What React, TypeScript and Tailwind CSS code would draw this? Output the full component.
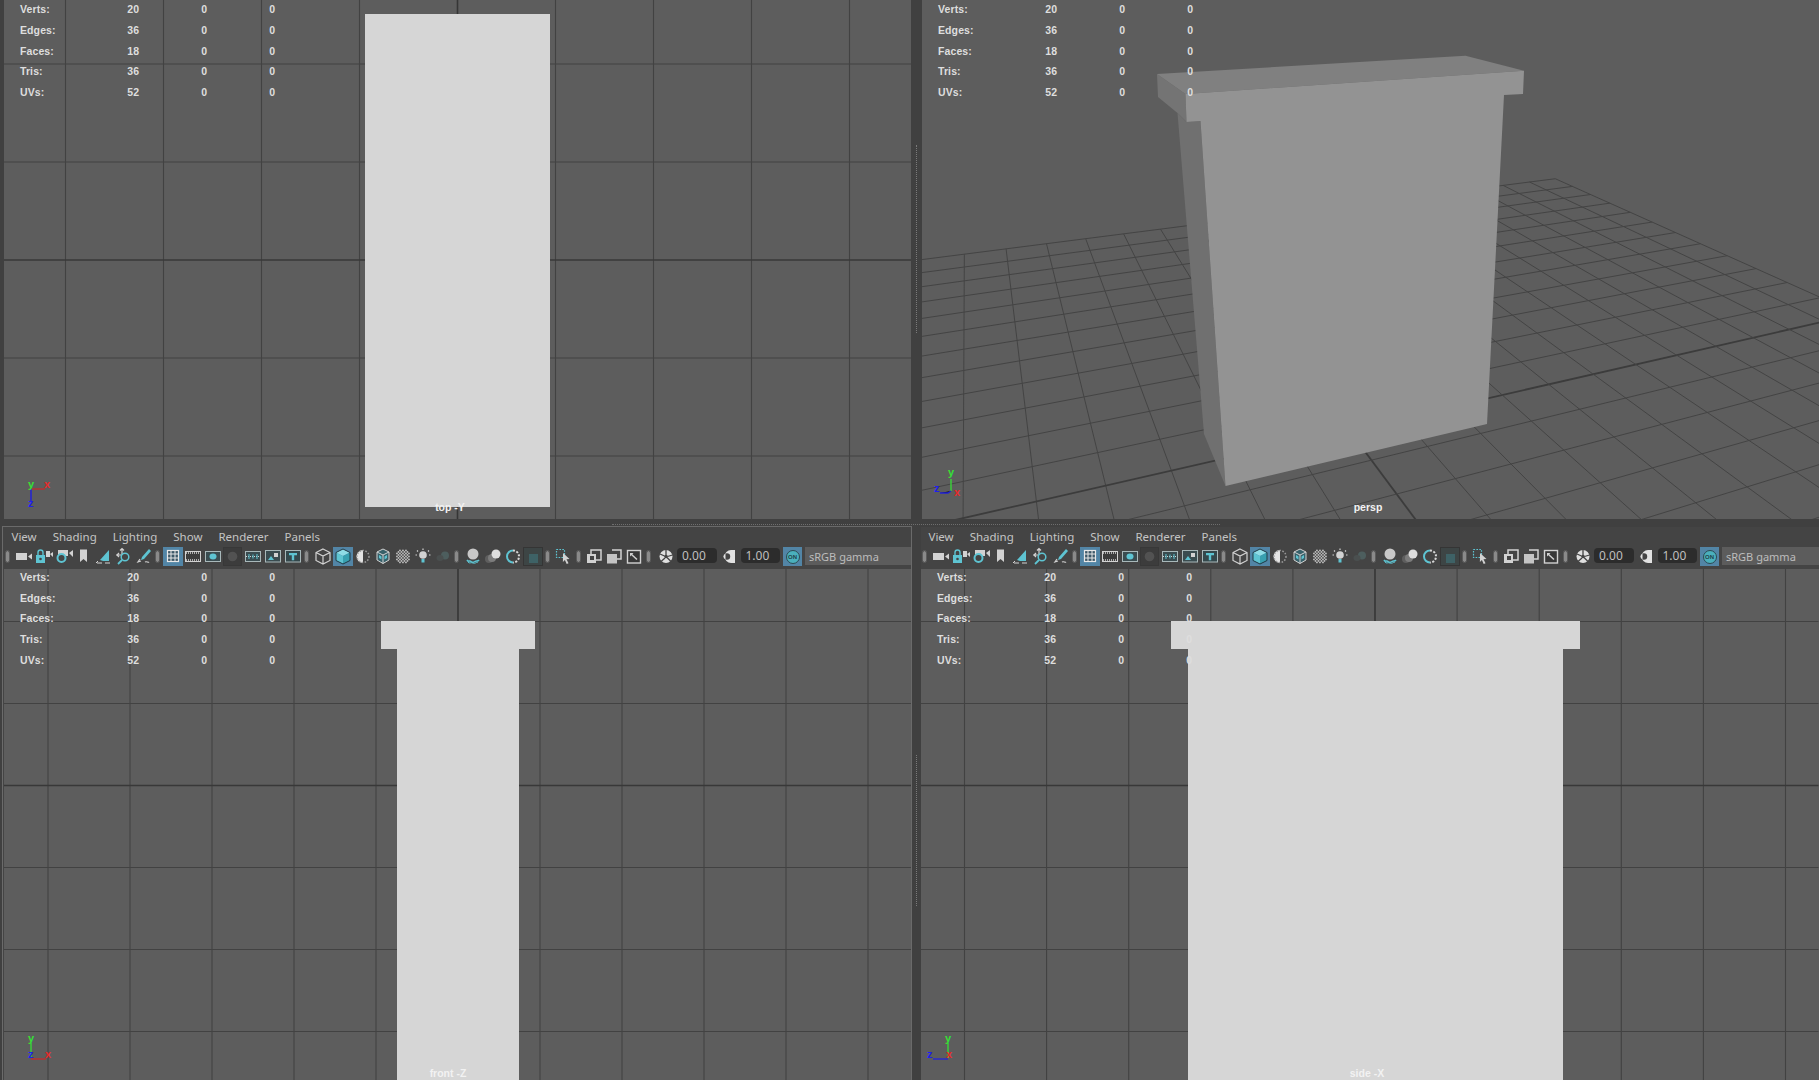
import type { ReactNode } from "react";

const LIGHT = "#d2d2d2";
const TEAL = "#5ec4d2";

const HUD_ROWS = [
  ["Verts:", "20"],
  ["Edges:", "36"],
  ["Faces:", "18"],
  ["Tris:", "36"],
  ["UVs:", "52"],
];

const MENU = ["View", "Shading", "Lighting", "Show", "Renderer", "Panels"];

// dots of the checker sphere
const CHECKS: number[][] = [];
for (let r = 0; r < 9; r++) {
  for (let c = 0; c < 9; c++) {
    if ((r + c) % 2 === 0 && Math.hypot(r - 4, c - 4) < 4.6) CHECKS.push([c, r]);
  }
}

// toolbar glyphs, all in a 20x19 box
const ICONS: Record<string, ReactNode> = {
  camera: (
    <>
      <rect x="2" y="6" width="11" height="7" fill={LIGHT} />
      <path d="M14 9.5l4-3v6z" fill={LIGHT} />
    </>
  ),
  cameraLock: (
    <>
      <path d="M12 4h4v6h-4z M16 7l3-2v5z" fill={LIGHT} />
      <rect x="2" y="8" width="9" height="8" fill={TEAL} />
      <path d="M4 8V5.500a2.500 2.500 0 0 1 5 0V8" fill="none" stroke={TEAL} strokeWidth="1.4" />
      <circle cx="6.500" cy="12" r="1.300" fill="#444" />
    </>
  ),
  cameraSync: (
    <>
      <path d="M4 3h10v6H4z M15 6l4-3v7z" fill={LIGHT} />
      <circle cx="7.500" cy="11" r="4" fill="#444" stroke={TEAL} strokeWidth="2" />
    </>
  ),
  bookmark: <path d="M6 2.500h7v12.500l-3.500-3-3.500 3z" fill={LIGHT} />,
  plane: (
    <>
      <path d="M6 13L15 3v11H9z" fill={TEAL} />
      <path d="M3 16h5M11 16h5M4 14l-2 2" stroke={LIGHT} strokeWidth="1" fill="none" />
    </>
  ),
  panZoom: (
    <>
      <path d="M8 2v6M2 8h5M5 6L3 8l2 2M6 3.500L8 1.500l2 2" stroke={LIGHT} strokeWidth="1.200" fill="none" />
      <circle cx="11" cy="10" r="3.800" fill="none" stroke={TEAL} strokeWidth="1.500" />
      <path d="M8 13l-4 4" stroke={TEAL} strokeWidth="1.800" />
    </>
  ),
  pencil: (
    <>
      <path d="M15 2l2 2-7 8-3 1 1-3z" fill={TEAL} />
      <path d="M6 12l-2 3 3-1M11 15c2-1 3 1 4 0" stroke={LIGHT} strokeWidth="1.200" fill="none" />
    </>
  ),
  grid: (
    <>
      <rect x="4.500" y="3.500" width="11" height="11" fill="#3d5868" stroke="#e8e8e8" strokeWidth="1.200" />
      <path d="M8 3.500v11M12 3.500v11M4.500 7h11M4.500 11h11" stroke="#e8e8e8" strokeWidth="1" />
    </>
  ),
  film: (
    <>
      <rect x="2.500" y="4.500" width="15" height="10" fill="#3c3c3c" stroke={LIGHT} strokeWidth="1" />
      <path d="M3 6h14M3 13h14" stroke={LIGHT} strokeWidth="1.400" strokeDasharray="1 1" />
    </>
  ),
  gate: (
    <>
      <rect x="2.500" y="4.500" width="15" height="10" fill="#3a4c50" stroke="#a8b8ba" strokeWidth="1" />
      <ellipse cx="10" cy="9.500" rx="3.500" ry="3" fill={TEAL} />
    </>
  ),
  field: (
    <>
      <rect x="0.500" y="0.500" width="18" height="18" fill="#3c3c3c" stroke="#383838" />
      <circle cx="9.500" cy="9.500" r="4.800" fill="#525252" />
    </>
  ),
  safe: (
    <>
      <rect x="2.500" y="4.500" width="15" height="10" fill="#3a4c50" stroke="#a8b8ba" strokeWidth="1" />
      <path d="M3 9.500h14" stroke={LIGHT} strokeDasharray="1 1" />
      <path d="M6 7v5M10 7.500v4M14 7v5" stroke={TEAL} />
    </>
  ),
  image: (
    <>
      <rect x="2.500" y="3.500" width="15" height="11.500" fill="#3a4c50" stroke="#a8b8ba" strokeWidth="1" />
      <path d="M5 13l3-4 3 4z" fill={TEAL} />
      <rect x="11" y="6" width="4" height="4" fill={LIGHT} />
    </>
  ),
  text: (
    <>
      <rect x="2.500" y="3.500" width="15" height="11.500" fill="#34484c" stroke="#a8b8ba" strokeWidth="1" />
      <path d="M6 6h8v2.200h-2.800v5h-2.400v-5H6z" fill={TEAL} />
    </>
  ),
  wire: (
    <path
      d="M10 2l7 3.500v8L10 17l-7-3.500v-8zM3 5.500L10 9l7-3.500M10 9v8"
      fill="none"
      stroke={LIGHT}
      strokeWidth="1.200"
    />
  ),
  solid: (
    <>
      <path d="M10 2l7 3.500L10 9 3 5.500z" fill="#8fdce6" />
      <path d="M3 5.500L10 9v8l-7-3.500z" fill={TEAL} />
      <path d="M17 5.500L10 9v8l7-3.500z" fill="#38a0b0" />
      <path d="M10 2l7 3.500v8L10 17l-7-3.500v-8z" fill="none" stroke="#1f3a44" />
    </>
  ),
  halfSphere: (
    <>
      <path d="M10 3a6.500 6.500 0 0 0 0 13z" fill="#e4e4e4" />
      <circle cx="10" cy="9.500" r="6" fill="none" stroke="#9a9a9a" strokeWidth="1.500" strokeDasharray="1.500 1.500" />
    </>
  ),
  texture: (
    <>
      <path d="M10 2l6 3v8l-6 3.500L4 13V5z" fill="#38616a" stroke={LIGHT} />
      <path d="M4 5l6 3 6-3M10 8v8.500" stroke={LIGHT} fill="none" />
      <path d="M6 8l2.500 1.500v3L6 11z M14 8l-2.500 1.500v3L14 11z" fill={TEAL} />
    </>
  ),
  checker: (
    <>
      {CHECKS.map(([c, r]) => (
        <rect key={`${c}-${r}`} x={3.2 + c * 1.5} y={2.700 + r * 1.5} width="1.500" height="1.500" fill="#cfcfcf" />
      ))}
    </>
  ),
  bulb: (
    <>
      <circle cx="10" cy="8" r="3.800" fill={LIGHT} />
      <rect x="8.500" y="12" width="3" height="3.500" fill={TEAL} />
      <path d="M10 1.500v1.500M4 3.500l1 1M16 3.500l-1 1M2.500 8H4M16 8h1.500" stroke={LIGHT} strokeWidth="1.200" />
    </>
  ),
  shadow: (
    <>
      <circle cx="12" cy="8.500" r="4" fill="#4d5e5e" />
      <ellipse cx="7" cy="11" rx="3.500" ry="3" fill="#4a4f4f" />
    </>
  ),
  ao: (
    <>
      <circle cx="10" cy="7" r="5.500" fill="#c8c8c8" />
      <path d="M4 13c1.500 2.500 2.500 0 4 1.500s2.500 1 4 0 2.500.5 4-1.500" fill="none" stroke={TEAL} strokeWidth="1.500" />
      <path d="M5 15c1.500 2 2.500 0 5 1s3-1 5-1" fill="none" stroke={TEAL} strokeWidth="1" />
    </>
  ),
  spheres: (
    <>
      <circle cx="6" cy="12" r="4" fill="#5e5e5e" />
      <circle cx="9" cy="11" r="4" fill="#7c7c7c" />
      <circle cx="13" cy="7" r="4.500" fill="#dedede" />
    </>
  ),
  ring: (
    <>
      <path d="M10 3.500a6 6 0 0 0 0 12" fill="none" stroke={TEAL} strokeWidth="2" />
      <path d="M10 3.500a6 6 0 0 1 0 12" fill="none" stroke="#d8d8d8" strokeWidth="2" strokeDasharray="2 1.500" />
    </>
  ),
  dimBox: (
    <>
      <rect x="0.500" y="0.500" width="19" height="18" fill="#3d4545" stroke="#353535" />
      <rect x="6" y="7" width="9" height="9" fill="#3e6266" />
    </>
  ),
  select: (
    <>
      <rect x="3.500" y="2.500" width="8" height="8" fill="none" stroke={TEAL} strokeWidth="1.200" strokeDasharray="1.600 1.300" />
      <path d="M10 6l6.500 6-3 .3 2 4-1.800.8-1.800-4-2 2z" fill={LIGHT} />
    </>
  ),
  isolate: (
    <>
      <rect x="7" y="3" width="10" height="10" fill="#444" stroke={LIGHT} strokeWidth="1.500" />
      <rect x="3" y="7" width="9" height="9" fill={LIGHT} />
      <rect x="6" y="9" width="4" height="4" fill="#444" />
    </>
  ),
  overlap: (
    <>
      <path d="M8 3h9v9h-4" fill="none" stroke={LIGHT} strokeWidth="1.500" />
      <rect x="3" y="7" width="10" height="9.500" fill="#c4c4c4" />
    </>
  ),
  boxArrow: (
    <>
      <rect x="3.500" y="3.500" width="13" height="12.500" fill="#383838" stroke={LIGHT} strokeWidth="1.400" />
      <path d="M7 7l6 5.500" stroke={LIGHT} strokeWidth="1.500" />
      <path d="M6 6h3.500L6 9.500z" fill={LIGHT} />
    </>
  ),
  aperture: (
    <>
      <circle cx="10" cy="9.500" r="6.500" fill="#e0e0e0" />
      <path d="M10 3v5M4 7l4.500 2M5 14.500L9 11M15 14.500l-4-4M16.500 8L11.500 9.500" stroke="#444" strokeWidth="1.300" />
      <circle cx="10" cy="9.500" r="1.800" fill="#444" />
    </>
  ),
  half: (
    <>
      <path d="M12 3h4v13h-4a6.500 6.500 0 0 1 0-13z" fill="#e2e2e2" />
      <circle cx="8" cy="9.500" r="3.200" fill="#444" />
      <path d="M6.500 6.500a3.200 3.200 0 0 0 0 6z" fill="#e2e2e2" />
    </>
  ),
};

function Ico({ name, on }: { name: string; on?: boolean }) {
  return (
    <div className={on ? "w-5 h-[19px] shrink-0 bg-[#5285a6]" : "w-5 h-[19px] shrink-0"}>
      <svg width="20" height="19" viewBox="0 0 20 19">
        {ICONS[name]}
      </svg>
    </div>
  );
}

function Sep({ className }: { className: string }) {
  return (
    <div className={`w-1 h-[19px] shrink-0 flex items-center justify-center ${className}`}>
      <div className="w-[3px] h-[11px] rounded-sm bg-[#8a8a8a] outline-[1px] outline-[#5c5c5c]" />
    </div>
  );
}

function NumField({ value }: { value: string }) {
  return (
    <div className="w-[39.5px] h-[15px] mt-px shrink-0 rounded-sm bg-[#2c2c2c] pl-[5px] text-[#bfbfbf] text-[12px] leading-[15px] font-['Noto_Sans',sans-serif]">
      {value}
    </div>
  );
}

function PanelChrome() {
  return (
    <>
      <div className="h-5 flex items-center gap-[16px] pl-[7.5px] text-[11.5px] text-[#c4c4c4] font-['Noto_Sans',sans-serif]">
        {MENU.map((m) => (
          <span key={m}>{m}</span>
        ))}
      </div>
      <div className="h-[22px] flex items-start pl-px">
        <Sep className="" />
        <div className="flex ml-[5px]">
          <Ico name="camera" />
          <Ico name="cameraLock" />
          <Ico name="cameraSync" />
          <Ico name="bookmark" />
          <Ico name="plane" />
          <Ico name="panZoom" />
          <Ico name="pencil" />
        </div>
        <Sep className="ml-px" />
        <div className="flex ml-[4px]">
          <Ico name="grid" on />
          <Ico name="film" />
          <Ico name="gate" />
          <Ico name="field" />
          <Ico name="safe" />
          <Ico name="image" />
          <Ico name="text" />
        </div>
        <Sep className="ml-px" />
        <div className="flex ml-[5px]">
          <Ico name="wire" />
          <Ico name="solid" on />
          <Ico name="halfSphere" />
          <Ico name="texture" />
          <Ico name="checker" />
          <Ico name="bulb" />
          <Ico name="shadow" />
        </div>
        <Sep className="ml-px" />
        <div className="flex ml-[5px]">
          <Ico name="ao" />
          <Ico name="spheres" />
          <Ico name="ring" />
          <Ico name="dimBox" />
        </div>
        <Sep className="ml-[2px]" />
        <div className="ml-[4px]">
          <Ico name="select" />
        </div>
        <Sep className="ml-[3px]" />
        <div className="flex ml-[4px]">
          <Ico name="isolate" />
          <Ico name="overlap" />
          <Ico name="boxArrow" />
        </div>
        <Sep className="ml-[2px]" />
        <div className="ml-[6px]">
          <Ico name="aperture" />
        </div>
        <div className="ml-px">
          <NumField value="0.00" />
        </div>
        <div className="ml-[2px]">
          <Ico name="half" />
        </div>
        <div className="ml-[2px]">
          <NumField value="1.00" />
        </div>
        <div className="ml-[3px] w-[19px] h-[19px] shrink-0 bg-[#5285a6] flex items-center justify-center">
          <div className="w-[14px] h-[14px] rounded-full bg-[#4ab0bc] border border-[#2c4a52] text-[6px] leading-[12px] text-center font-bold text-[#23424a] font-['Liberation_Sans',sans-serif]">
            ON
          </div>
        </div>
        <div className="ml-[3px] flex-1 min-w-0 h-[18px] bg-[#5c5c5c] pl-[4px] text-[11px] leading-[19px] text-[#bdbdbd] font-['Noto_Sans',sans-serif]">
          sRGB gamma
        </div>
      </div>
    </>
  );
}

function Hud({ top }: { top: string }) {
  return (
    <div
      className={`absolute left-4 ${top} grid grid-cols-[60px_59px_68px_68px] auto-rows-[20.75px] items-center text-[10.5px] font-bold text-[#dedede] font-['Liberation_Sans',sans-serif]`}
    >
      {HUD_ROWS.map(([label, n]) => (
        <div key={label} className="contents">
          <span className="tracking-[0.1px]">{label}</span>
          <span className="text-right">{n}</span>
          <span className="text-right">0</span>
          <span className="text-right">0</span>
        </div>
      ))}
    </div>
  );
}

function Gizmo({ kind, className }: { kind: "top" | "front" | "side" | "persp"; className: string }) {
  const letter = "font-['Liberation_Sans',sans-serif] font-bold text-[11px]";
  const green = "#35e035";
  const red = "#e82a2a";
  const blue = "#2020ee";
  return (
    <svg className={`absolute ${className}`} width="44" height="50" viewBox="0 -6 44 50">
      {kind === "top" && (
        <>
          <path d="M14 13h14" stroke="#c52a2a" strokeWidth="1.300" />
          <path d="M14 13v13" stroke="#2222d8" strokeWidth="1.500" />
          <text x="11" y="12" fill={green} className={letter}>y</text>
          <text x="27" y="12" fill={red} className={letter}>x</text>
          <text x="11" y="31" fill={blue} className={letter}>z</text>
        </>
      )}
      {kind === "front" && (
        <>
          <path d="M14 24v-15" stroke={green} strokeWidth="1.300" />
          <path d="M14 25h15" stroke="#c52a2a" strokeWidth="1.300" />
          <text x="11" y="8" fill={green} className={letter}>y</text>
          <text x="28" y="24" fill={red} className={letter}>x</text>
          <text x="11" y="24" fill={blue} className={letter}>z</text>
        </>
      )}
      {kind === "side" && (
        <>
          <path d="M27 24v-15" stroke={green} strokeWidth="1.300" />
          <path d="M27 25h-15" stroke="#2222d8" strokeWidth="1.300" />
          <text x="24" y="8" fill={green} className={letter}>y</text>
          <text x="6" y="24" fill={blue} className={letter}>z</text>
          <text x="25" y="24" fill={red} className={letter}>x</text>
        </>
      )}
      {kind === "persp" && (
        <>
          <path d="M27 26v-12" stroke={green} strokeWidth="1.300" />
          <path d="M27 26l-3 2h-8" stroke="#2222d8" strokeWidth="1.300" />
          <text x="24" y="11" fill={green} className={letter}>y</text>
          <text x="10" y="27" fill={blue} className={letter}>z</text>
          <text x="30" y="31" fill={red} className={letter}>x</text>
        </>
      )}
    </svg>
  );
}

function OrthoGrid({
  box,
  xs,
  ys,
  heavyX,
  heavyY,
  children,
}: {
  box: string;
  xs: number[];
  ys: number[];
  heavyX: number;
  heavyY: number;
  children: ReactNode;
}) {
  return (
    <svg className="absolute inset-0 w-full h-full" viewBox={box}>
      {xs.map((x) => (
        <line key={x} x1={x} x2={x} y1="0" y2="1080" stroke={x === heavyX ? "#363636" : "#424242"} strokeWidth={x === heavyX ? 1.6 : 1.1} />
      ))}
      {ys.map((y) => (
        <line key={y} x1="0" x2="1819" y1={y} y2={y} stroke={y === heavyY ? "#383838" : "#424242"} strokeWidth={y === heavyY ? 1.4 : 1.1} />
      ))}
      {children}
    </svg>
  );
}

const steps = (start: number, step: number, n: number) =>
  Array.from({ length: n }, (_, i) => start + step * i);

// floor grid of the persp view, from its two vanishing points
const O = [1349, 430];
const VU = [3582, -80];
const VV = [966, -85];
function floor(i: number, j: number) {
  const a = i * 0.02456;
  const b = -j * 0.0553;
  const w = 1 + a + b;
  return [(O[0] + a * VU[0] + b * VV[0]) / w, (O[1] + a * VU[1] + b * VV[1]) / w];
}

function PerspFloor() {
  const lines = [];
  for (let k = -12; k <= 12; k++) {
    const [x1, y1] = floor(k, -12);
    const [x2, y2] = floor(k, 11);
    const [x3, y3] = floor(-11, k);
    const [x4, y4] = floor(12, k);
    const heavy = k === 0;
    lines.push(
      <line key={`i${k}`} x1={x1} y1={y1} x2={x2} y2={y2} stroke={heavy ? "#3c3c3c" : "#444"} strokeWidth={heavy ? 1.8 : 1} />,
      <line key={`j${k}`} x1={x3} y1={y3} x2={x4} y2={y4} stroke={heavy ? "#3c3c3c" : "#444"} strokeWidth={heavy ? 1.8 : 1} />
    );
  }
  return <>{lines}</>;
}

function Label({ text, className }: { text: string; className: string }) {
  return (
    <span className={`absolute -translate-x-1/2 text-[10.5px] leading-3 font-bold text-[#f2f2f2] whitespace-nowrap font-['Liberation_Sans',sans-serif] ${className}`}>
      {text}
    </span>
  );
}

export default function App() {
  return (
    <div className="w-[1819px] h-[1080px] overflow-hidden flex flex-col bg-[#404040]">
      {/* top row */}
      <div className="h-[519px] flex shrink-0">
        <div className="relative w-[907px] ml-1 overflow-hidden bg-[#5d5d5d]">
          <OrthoGrid box="4 0 907 519" xs={steps(65.5, 98, 9)} ys={steps(64, 98, 5)} heavyX={457.5} heavyY={260}>
            <rect x="365" y="14" width="185" height="493" fill="#d6d6d6" />
          </OrthoGrid>
          <Hud top="-top-[0.4px]" />
          <Gizmo kind="top" className="left-[13px] bottom-[-1px]" />
          <Label text="top -Y" className="left-[446px] top-[501px]" />
        </div>
        <div className="relative w-[11px] shrink-0">
          <div className="absolute left-[5px] top-[145px] h-[188px] border-l border-dotted border-[#7a7a7a]" />
        </div>
        <div className="relative flex-1 overflow-hidden bg-[#5d5d5d]">
          <svg className="absolute inset-0 w-full h-full" viewBox="922 0 897 519">
            <PerspFloor />
            <path d="M1157 74L1185.500 94 1186.500 122 1177.500 113 1158 97z" fill="#747474" />
            <path d="M1177.500 113L1186.500 122 1200.500 121 1225.500 486 1204 434z" fill="#707070" />
            <path d="M1157 74L1465.500 55.700 1524 70.700 1185.500 94z" fill="#808080" />
            <path d="M1185.500 94L1524 70.700 1523 94 1504 95 1487 424 1225.500 486 1200.500 121 1186.500 122z" fill="#939393" />
          </svg>
          <Hud top="-top-[0.4px]" />
          <Gizmo kind="persp" className="left-[2px] bottom-[10px]" />
          <Label text="persp" className="left-[446px] top-[501px]" />
        </div>
      </div>

      {/* gap with the horizontal sash */}
      <div className="relative h-[7px] shrink-0">
        <div className="absolute left-[612px] top-[5px] w-[608px] border-t border-dotted border-[#6e6e6e]" />
      </div>

      {/* bottom row */}
      <div className="flex-1 min-h-0 flex">
        <div className="ml-[2px] w-[910px] flex flex-col border-t border-x border-[#6a6a6a] bg-[#444444]">
          <div className="pl-px">
            <PanelChrome />
          </div>
          <div className="relative flex-1 ml-px overflow-hidden bg-[#5d5d5d]">
            <OrthoGrid box="4 569 907 511" xs={steps(48, 82, 11)} ys={steps(621.5, 82, 6)} heavyX={458} heavyY={785.5}>
              <rect x="381" y="621" width="154" height="28" fill="#d6d6d6" />
              <rect x="397" y="649" width="122" height="431" fill="#d6d6d6" />
            </OrthoGrid>
            <Hud top="-top-[1.6px]" />
            <Gizmo kind="front" className="left-[13px] bottom-[2px]" />
            <Label text="front -Z" className="left-[444px] top-[498px]" />
          </div>
        </div>
        <div className="relative w-[9px] shrink-0">
          <div className="absolute left-[4px] top-[229px] h-[151px] border-l border-dotted border-[#7a7a7a]" />
        </div>
        <div className="flex-1 min-w-0 flex flex-col bg-[#444444] mt-px">
          <PanelChrome />
          <div className="relative flex-1 overflow-hidden bg-[#5d5d5d]">
            <OrthoGrid box="922 569 897 511" xs={steps(965, 82.1, 11)} ys={steps(621.5, 82, 6)} heavyX={1375.5} heavyY={785.5}>
              <rect x="1171.500" y="621" width="409" height="28" fill="#d6d6d6" />
              <rect x="1188.500" y="649" width="375" height="431" fill="#d6d6d6" />
            </OrthoGrid>
            <Hud top="-top-[1.6px]" />
            <Gizmo kind="side" className="left-[0px] bottom-[2px]" />
            <Label text="side -X" className="left-[446px] top-[498px]" />
          </div>
        </div>
      </div>
    </div>
  );
}
